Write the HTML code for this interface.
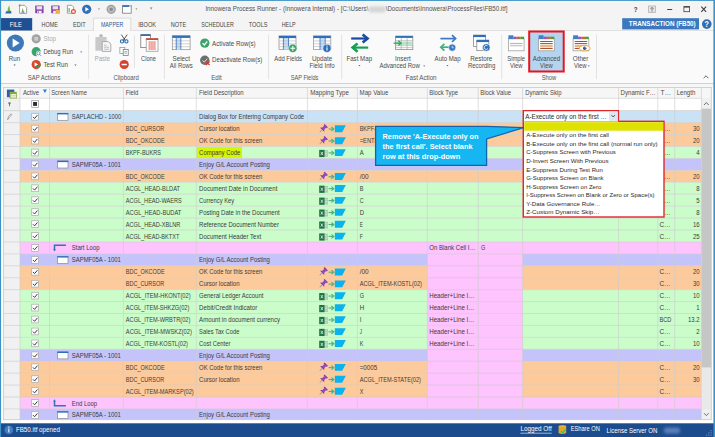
<!DOCTYPE html>
<html><head><meta charset="utf-8"><title>Innowera Process Runner</title>
<style>
html,body{margin:0;padding:0;width:715px;height:437px;overflow:hidden;background:#fff}
svg{display:block;font-family:"Liberation Sans",sans-serif}
text{white-space:pre}
</style></head><body>
<svg width="715" height="437" viewBox="0 0 715 437">
<rect x="0.00" y="0.00" width="715.00" height="437.00" fill="#ffffff"/>
<rect x="0.00" y="0.00" width="715.00" height="30.50" fill="#f4f4f4"/>
<rect x="0.00" y="30.50" width="715.00" height="53.10" fill="#fafafa"/>
<line x1="0.00" y1="30.50" x2="715.00" y2="30.50" stroke="#dadada" stroke-width="0.8"/>
<line x1="0.00" y1="83.60" x2="715.00" y2="83.60" stroke="#cdcdcd" stroke-width="1"/>
<rect x="0.00" y="84.10" width="715.00" height="3.40" fill="#f6f6f6"/>
<rect x="0.00" y="423.30" width="715.00" height="13.70" fill="#1c4b8e"/>
<path d="M9.6 5.2 C8.2 6.8 7.4 9 7.6 11.6 L10.6 11.2 C9.6 9.4 9.4 7.2 9.6 5.2Z" fill="#74bf2c"/>
<path d="M5.2 13.4 L6.2 11.2 L11.2 11 L11.4 13.4Z" fill="#2a6cb4"/>
<path d="M19.6 5.3 H24.6 L26.6 7.3 V13.4 H19.6Z" fill="#fff" stroke="#8a8a8a" stroke-width="0.8"/>
<path d="M22.9 8 C22.2 9 21.9 10.2 22 11.8 L24 11.6 C23.3 10.6 23.1 9.4 22.9 8Z" fill="#74bf2c"/>
<rect x="21.4" y="11.6" width="3" height="1" fill="#2a6cb4"/>
<circle cx="19.6" cy="5.4" r="0.9" fill="#e05a3a"/>
<rect x="35.2" y="5.6" width="8.4" height="7.6" rx="0.6" fill="#8a3fb0"/>
<rect x="36.6" y="6.2" width="5.6" height="3.2" fill="#e6e6e6"/>
<rect x="37.2" y="10.8" width="4.4" height="2.4" fill="#ffffff"/><rect x="37.8" y="11.3" width="1" height="1.6" fill="#8a3fb0"/>
<rect x="51.2" y="5.6" width="8.4" height="7.6" rx="0.6" fill="#8a3fb0"/>
<rect x="52.6" y="6.2" width="5.6" height="3.2" fill="#e6e6e6"/>
<rect x="53.2" y="10.8" width="2.6" height="2.4" fill="#ffffff"/>
<path d="M55.8 10 H60 V13.6 H55.8Z" fill="#f0b040"/>
<path d="M67.4 5.3 H71.8 L73.6 7.1 V13.2 H67.4Z" fill="#fff" stroke="#8a8a8a" stroke-width="0.8"/>
<rect x="68.6" y="8" width="1" height="4" fill="#3aa23a"/>
<circle cx="73.4" cy="11.6" r="2.5" fill="#e0553f"/><rect x="72.3" y="10.6" width="2.2" height="2" fill="#fff"/>
<circle cx="86.7" cy="9.3" r="4.6" fill="#2f70b8"/><path d="M85.3 7 L89 9.3 L85.3 11.6Z" fill="#fff"/>
<path d="M97.9 8.5 H100 L98.95 9.7Z" fill="#777"/>
<circle cx="111.2" cy="9.3" r="4.6" fill="#9c9c9c"/><circle cx="111.2" cy="9.3" r="3.4" fill="#bdbdbd"/><rect x="109.7" y="7.8" width="3" height="3" fill="#8a8a8a"/>
<rect x="122.6" y="5.4" width="8.6" height="7.8" fill="#fff" stroke="#7a7a7a" stroke-width="0.8"/><rect x="122.6" y="5.2" width="8.6" height="1.8" fill="#3a78c0"/><rect x="129" y="5.2" width="2.2" height="1.8" fill="#c8c8c8"/>
<path d="M135.4 8.5 H137.5 L136.45 9.7Z" fill="#777"/>
<path d="M150.1 8.2 H152.3 L151.2 9.6Z" fill="#777"/><rect x="150.1" y="7.1" width="2.2" height="0.5" fill="#777"/>
<text x="205.40" y="10.90" font-size="6.59" fill="#505050" textLength="163.00" lengthAdjust="spacingAndGlyphs">Innowera Process Runner - (Innowera Internal) - [C:\Users\</text>
<rect x="369" y="6.5" width="16.5" height="6" fill="#d6d6d6" rx="1.5" filter="url(#blur1)"/>
<text x="385.70" y="10.90" font-size="6.59" fill="#505050" textLength="121.70" lengthAdjust="spacingAndGlyphs">\Documents\Innowera\ProcessFiles\FB50.itf]</text>
<defs><filter id="blur1" x="-20%" y="-50%" width="140%" height="200%"><feGaussianBlur stdDeviation="1.2"/></filter><filter id="blur2" x="-20%" y="-50%" width="140%" height="200%"><feGaussianBlur stdDeviation="1.5"/></filter></defs>
<text x="633.80" y="11.90" font-size="7.20" fill="#3a3a3a" textLength="3.80" lengthAdjust="spacingAndGlyphs" font-weight="bold">?</text>
<rect x="648.6" y="6.0" width="6.9" height="6.5" fill="#e4e4e4" stroke="#b4b4b4" stroke-width="0.8"/><path d="M652.05 11.6 V7.6 M650.6 8.9 L652.05 7.4 L653.5 8.9" stroke="#6a6a6a" stroke-width="0.8" fill="none"/>
<rect x="667.2" y="9.0" width="5" height="1" fill="#444"/>
<rect x="683.9" y="6.6" width="5.7" height="5.1" fill="none" stroke="#444" stroke-width="0.8"/><rect x="683.9" y="6.3" width="5.7" height="1.3" fill="#444"/>
<path d="M701.3 6.6 L706.1 11.8 M706.1 6.6 L701.3 11.8" stroke="#3a3a3a" stroke-width="1.05"/>
<rect x="0.00" y="18.10" width="32.20" height="12.40" fill="#1f4f94"/>
<text x="9.70" y="26.50" font-size="6.59" fill="#ffffff" textLength="12.10" lengthAdjust="spacingAndGlyphs">FILE</text>
<text x="41.60" y="26.60" font-size="6.59" fill="#444" textLength="16.30" lengthAdjust="spacingAndGlyphs">HOME</text>
<text x="73.00" y="26.60" font-size="6.59" fill="#444" textLength="12.60" lengthAdjust="spacingAndGlyphs">EDIT</text>
<path d="M93.5 30.8 V18.1 H130.8 V30.8" fill="#fafafa" stroke="#d4d4d4" stroke-width="0.8"/>
<text x="100.90" y="26.60" font-size="6.59" fill="#2b5797" textLength="22.40" lengthAdjust="spacingAndGlyphs">MAPPER</text>
<text x="138.30" y="26.60" font-size="6.59" fill="#444" textLength="17.70" lengthAdjust="spacingAndGlyphs">IBOOK</text>
<text x="170.80" y="26.60" font-size="6.59" fill="#444" textLength="15.40" lengthAdjust="spacingAndGlyphs">NOTE</text>
<text x="201.20" y="26.60" font-size="6.59" fill="#444" textLength="32.70" lengthAdjust="spacingAndGlyphs">SCHEDULER</text>
<text x="248.70" y="26.60" font-size="6.59" fill="#444" textLength="18.80" lengthAdjust="spacingAndGlyphs">TOOLS</text>
<text x="281.70" y="26.60" font-size="6.59" fill="#444" textLength="14.00" lengthAdjust="spacingAndGlyphs">HELP</text>
<rect x="622.20" y="18.20" width="76.80" height="11.20" fill="#3b78bd"/>
<text x="628.80" y="26.40" font-size="7.13" fill="#ffffff" textLength="66.90" lengthAdjust="spacingAndGlyphs" font-weight="bold">TRANSACTION (FB50)</text>
<circle cx="706.8" cy="24.1" r="4.8" fill="#2f6cb3"/>
<text x="704.60" y="26.90" font-size="8.21" fill="#ffffff" textLength="4.40" lengthAdjust="spacingAndGlyphs" font-weight="bold">?</text>
<circle cx="15.4" cy="43" r="8.6" fill="#3f78b9"/><path d="M12.6 38.6 L19.6 43 L12.6 47.4Z" fill="#fff"/>
<text x="8.80" y="60.90" font-size="6.70" fill="#4a4a4a" textLength="11.30" lengthAdjust="spacingAndGlyphs">Run</text>
<path d="M13.50 64.60 H15.70 L14.60 65.90Z" fill="#666"/>
<circle cx="36.2" cy="38.8" r="4.6" fill="#a3a3a3"/><rect x="34.4" y="37.0" width="3.6" height="3.6" fill="#d6d6d6"/><path d="M36.2 37.2 V40.4 M34.6 38.8 H37.8" stroke="#b8b8b8" stroke-width="0.5"/>
<text x="43.40" y="41.00" font-size="6.70" fill="#ababab" textLength="12.60" lengthAdjust="spacingAndGlyphs">Stop</text>
<circle cx="36.2" cy="51.7" r="4.6" fill="#3aa56a"/><circle cx="38.6" cy="53.4" r="2.6" fill="#fafafa"/><circle cx="38.4" cy="53.2" r="1.6" fill="#fff" stroke="#3a6ab8" stroke-width="0.7"/><path d="M39.5 54.3 L41 55.8" stroke="#3a6ab8" stroke-width="0.8"/>
<text x="43.40" y="53.90" font-size="6.70" fill="#4a4a4a" textLength="29.60" lengthAdjust="spacingAndGlyphs">Debug Run</text>
<path d="M80.10 51.50 H82.30 L81.20 52.80Z" fill="#666"/>
<circle cx="36.2" cy="64.6" r="4.6" fill="#d8482e"/><path d="M34.6 62.2 L38 64.4 L34.6 66.6Z" fill="#fff"/><path d="M36.2 66.2 L37.8 67.8 L40.8 64.6" stroke="#2aa050" stroke-width="1.2" fill="none"/>
<text x="43.40" y="66.80" font-size="6.70" fill="#4a4a4a" textLength="24.60" lengthAdjust="spacingAndGlyphs">Test Run</text>
<path d="M74.40 64.60 H76.60 L75.50 65.90Z" fill="#666"/>
<text x="27.70" y="79.80" font-size="6.70" fill="#555" textLength="32.70" lengthAdjust="spacingAndGlyphs">SAP Actions</text>
<line x1="88.60" y1="34.70" x2="88.60" y2="79.20" stroke="#dcdcdc" stroke-width="0.8"/>
<path d="M95.4 37 H99 V35.2 H103 V37 H106.6 V50.8 H95.4Z" fill="#c9c9c9"/><rect x="99.8" y="34.4" width="2.4" height="1.8" fill="#b0b0b0"/>
<path d="M102.2 41.6 H108.4 L110.8 44 V51.4 H102.2Z" fill="#f6f6f6" stroke="#a4a4a4" stroke-width="0.9"/><path d="M104 45.2 H106.6 M104 47.2 H109 M104 49.2 H109" stroke="#a8a8a8" stroke-width="0.7"/>
<text x="94.70" y="60.70" font-size="6.70" fill="#a6a6a6" textLength="15.30" lengthAdjust="spacingAndGlyphs">Paste</text>
<path d="M121.3 34.6 L125.6 41 M127.2 34.6 L122.8 41" stroke="#444" stroke-width="0.9"/><circle cx="122" cy="41.4" r="1.6" fill="none" stroke="#1f6cc0" stroke-width="1.1"/><circle cx="126.4" cy="41.4" r="1.6" fill="none" stroke="#1f6cc0" stroke-width="1.1"/>
<rect x="119.9" y="47.5" width="5" height="6" fill="#fff" stroke="#8a8a8a" stroke-width="0.7"/><rect x="123.2" y="49.6" width="5" height="6" fill="#fff" stroke="#6a6a6a" stroke-width="0.7"/><path d="M124.4 51.6 H127 M124.4 53.2 H127" stroke="#3a7ac0" stroke-width="0.6"/>
<circle cx="124.2" cy="64.5" r="4.6" fill="#d9432b"/><rect x="121.6" y="63.8" width="5.2" height="1.5" fill="#fff"/>
<line x1="134.40" y1="35.50" x2="134.40" y2="68.00" stroke="#dcdcdc" stroke-width="0.8"/>
<rect x="140.8" y="34.6" width="9.6" height="13" fill="#fff" stroke="#777" stroke-width="0.8"/><rect x="140.8" y="34.4" width="9.6" height="1.6" fill="#2f6fb8"/>
<rect x="146.2" y="38.6" width="11.8" height="12.6" fill="#fff" stroke="#8a8a8a" stroke-width="0.7"/><rect x="146.2" y="38.3" width="11.8" height="1.7" fill="#d8452f"/><rect x="148.4" y="41.2" width="7.4" height="8.8" fill="#f6c4bc"/><path d="M149.4 41.2 V50 M151.2 41.2 V50 M153 41.2 V50 M154.8 41.2 V50" stroke="#e8877a" stroke-width="0.6"/>
<text x="141.00" y="60.70" font-size="6.70" fill="#4a4a4a" textLength="15.00" lengthAdjust="spacingAndGlyphs">Clone</text>
<text x="113.40" y="79.80" font-size="6.70" fill="#555" textLength="25.50" lengthAdjust="spacingAndGlyphs">Clipboard</text>
<line x1="164.40" y1="34.70" x2="164.40" y2="79.20" stroke="#dcdcdc" stroke-width="0.8"/>
<rect x="172.30" y="35.70" width="17.80" height="14.00" fill="#fff" stroke="#8a8a8a" stroke-width="0.7"/>
<rect x="176.22" y="37.70" width="4.63" height="12.00" fill="#c4e0f8"/>
<line x1="172.30" y1="40.85" x2="190.10" y2="40.85" stroke="#b0b0b0" stroke-width="0.6"/>
<line x1="172.30" y1="43.80" x2="190.10" y2="43.80" stroke="#b0b0b0" stroke-width="0.6"/>
<line x1="172.30" y1="46.75" x2="190.10" y2="46.75" stroke="#b0b0b0" stroke-width="0.6"/>
<line x1="176.22" y1="37.70" x2="176.22" y2="49.70" stroke="#3a6ab0" stroke-width="0.8"/>
<line x1="180.84" y1="37.70" x2="180.84" y2="49.70" stroke="#3a6ab0" stroke-width="0.8"/>
<rect x="172.30" y="35.70" width="17.80" height="2.2" fill="#2f6fb8"/>
<text x="172.50" y="60.90" font-size="6.70" fill="#4a4a4a" textLength="17.40" lengthAdjust="spacingAndGlyphs">Select</text>
<text x="169.70" y="68.00" font-size="6.70" fill="#4a4a4a" textLength="23.00" lengthAdjust="spacingAndGlyphs">All Rows</text>
<circle cx="204.8" cy="43.1" r="4.7" fill="#3aa66a"/><path d="M202.6 43.2 L204.3 45 L207.2 41.5" stroke="#fff" stroke-width="1.2" fill="none"/>
<text x="212.00" y="45.50" font-size="6.70" fill="#4a4a4a" textLength="43.70" lengthAdjust="spacingAndGlyphs">Activate Row(s)</text>
<circle cx="204.8" cy="60.3" r="4.7" fill="#6e6e6e"/><path d="M202.6 60.4 L204.3 62.2 L207.2 58.7" stroke="#ddd" stroke-width="1" fill="none"/><path d="M206 61.6 L209.6 65.2 M209.6 61.6 L206 65.2" stroke="#e0302a" stroke-width="1.2"/>
<text x="212.00" y="62.40" font-size="6.70" fill="#4a4a4a" textLength="50.40" lengthAdjust="spacingAndGlyphs">Deactivate Row(s)</text>
<text x="211.20" y="79.80" font-size="6.70" fill="#555" textLength="10.60" lengthAdjust="spacingAndGlyphs">Edit</text>
<line x1="268.60" y1="34.70" x2="268.60" y2="79.20" stroke="#dcdcdc" stroke-width="0.8"/>
<rect x="279.00" y="35.90" width="17.00" height="13.60" fill="#fff" stroke="#8a8a8a" stroke-width="0.7"/>
<rect x="283.42" y="37.90" width="5.10" height="11.60" fill="#c4e0f8"/>
<line x1="279.00" y1="40.95" x2="296.00" y2="40.95" stroke="#b0b0b0" stroke-width="0.6"/>
<line x1="279.00" y1="43.80" x2="296.00" y2="43.80" stroke="#b0b0b0" stroke-width="0.6"/>
<line x1="279.00" y1="46.65" x2="296.00" y2="46.65" stroke="#b0b0b0" stroke-width="0.6"/>
<line x1="283.42" y1="37.90" x2="283.42" y2="49.50" stroke="#3a6ab0" stroke-width="0.8"/>
<line x1="288.52" y1="37.90" x2="288.52" y2="49.50" stroke="#3a6ab0" stroke-width="0.8"/>
<rect x="279.00" y="35.90" width="17.00" height="2.2" fill="#2f6fb8"/>
<circle cx="292.8" cy="48.3" r="4.3" fill="#3aa66a" stroke="#fff" stroke-width="0.6"/><path d="M292.8 45.9 V50.7 M290.4 48.3 H295.2" stroke="#fff" stroke-width="1.1"/>
<text x="274.30" y="60.70" font-size="6.70" fill="#4a4a4a" textLength="27.70" lengthAdjust="spacingAndGlyphs">Add Fields</text>
<rect x="313.40" y="35.90" width="17.40" height="13.60" fill="#fff" stroke="#8a8a8a" stroke-width="0.7"/>
<rect x="320.01" y="37.90" width="5.22" height="11.60" fill="#c4e0f8"/>
<line x1="313.40" y1="40.95" x2="330.80" y2="40.95" stroke="#b0b0b0" stroke-width="0.6"/>
<line x1="313.40" y1="43.80" x2="330.80" y2="43.80" stroke="#b0b0b0" stroke-width="0.6"/>
<line x1="313.40" y1="46.65" x2="330.80" y2="46.65" stroke="#b0b0b0" stroke-width="0.6"/>
<line x1="320.01" y1="37.90" x2="320.01" y2="49.50" stroke="#3a6ab0" stroke-width="0.8"/>
<line x1="325.23" y1="37.90" x2="325.23" y2="49.50" stroke="#3a6ab0" stroke-width="0.8"/>
<rect x="313.40" y="35.90" width="17.40" height="2.2" fill="#2f6fb8"/>
<circle cx="327.0" cy="48.3" r="4.1" fill="#2f6fb8" stroke="#fff" stroke-width="0.6"/><rect x="326.45" y="47.3" width="1.1" height="3.2" fill="#fff"/><rect x="326.45" y="45.5" width="1.1" height="1.1" fill="#fff"/>
<text x="311.90" y="60.70" font-size="6.70" fill="#4a4a4a" textLength="20.40" lengthAdjust="spacingAndGlyphs">Update</text>
<text x="309.50" y="68.00" font-size="6.70" fill="#4a4a4a" textLength="25.20" lengthAdjust="spacingAndGlyphs">Field Info</text>
<text x="290.70" y="79.80" font-size="6.70" fill="#555" textLength="27.70" lengthAdjust="spacingAndGlyphs">SAP Fields</text>
<line x1="341.70" y1="34.70" x2="341.70" y2="79.20" stroke="#dcdcdc" stroke-width="0.8"/>
<path d="M351.2 38.5 H367" stroke="#1a4aa8" stroke-width="2.2"/><path d="M362.6 34.4 L367.6 38.5 L362.6 42.6" stroke="#1a4aa8" stroke-width="2.6" fill="none" stroke-linejoin="miter"/>
<path d="M353 47.6 H368.2" stroke="#14a052" stroke-width="2.2"/><path d="M357.6 43.5 L352.6 47.6 L357.6 51.7" stroke="#14a052" stroke-width="2.6" fill="none" stroke-linejoin="miter"/>
<text x="346.40" y="60.70" font-size="6.70" fill="#4a4a4a" textLength="25.70" lengthAdjust="spacingAndGlyphs">Fast Map</text>
<path d="M358.30 65.00 H360.50 L359.40 66.30Z" fill="#666"/>
<rect x="395.6" y="36.2" width="17.2" height="13.4" fill="#fff" stroke="#8e8e8e" stroke-width="0.8"/><rect x="395.6" y="35.9" width="17.2" height="2" fill="#2f6fb8"/>
<rect x="396" y="41.6" width="16.4" height="3.2" fill="#b6e2c2"/>
<line x1="401.30" y1="37.90" x2="401.30" y2="49.60" stroke="#9a9a9a" stroke-width="0.6"/>
<line x1="407.10" y1="37.90" x2="407.10" y2="49.60" stroke="#9a9a9a" stroke-width="0.6"/>
<line x1="395.60" y1="40.60" x2="412.80" y2="40.60" stroke="#a8a8a8" stroke-width="0.6"/>
<line x1="395.60" y1="45.60" x2="412.80" y2="45.60" stroke="#a8a8a8" stroke-width="0.6"/>
<line x1="395.60" y1="47.60" x2="412.80" y2="47.60" stroke="#a8a8a8" stroke-width="0.6"/>
<path d="M393.6 43.2 H400.6" stroke="#2ea468" stroke-width="1.3"/><path d="M398.4 40.8 L400.9 43.2 L398.4 45.6" stroke="#2ea468" stroke-width="1.3" fill="none"/>
<text x="395.10" y="60.70" font-size="6.70" fill="#4a4a4a" textLength="15.60" lengthAdjust="spacingAndGlyphs">Insert</text>
<text x="379.40" y="67.60" font-size="6.70" fill="#4a4a4a" textLength="40.40" lengthAdjust="spacingAndGlyphs">Advanced Row</text>
<path d="M423.10 65.40 H425.30 L424.20 66.70Z" fill="#666"/>
<path d="M440.4 38.6 H455.2" stroke="#3a78c0" stroke-width="1.7"/><path d="M452 35.2 L455.6 38.6 L452 42" stroke="#3a78c0" stroke-width="1.7" fill="none"/>
<path d="M441 47.2 H450" stroke="#3fb07a" stroke-width="1.7"/><path d="M444.4 43.8 L440.8 47.2 L444.4 50.6" stroke="#3fb07a" stroke-width="1.7" fill="none"/>
<circle cx="452.2" cy="47.6" r="3.6" fill="#3a78c0" stroke="#fafafa" stroke-width="0.6"/><path d="M452.2 45.8 V47.8 H453.8" stroke="#fff" stroke-width="0.7" fill="none"/>
<text x="434.60" y="60.70" font-size="6.70" fill="#4a4a4a" textLength="25.90" lengthAdjust="spacingAndGlyphs">Auto Map</text>
<path d="M446.30 65.00 H448.50 L447.40 66.30Z" fill="#666"/>
<rect x="473.4" y="35.2" width="12.2" height="11.2" fill="#fff" stroke="#8a8a8a" stroke-width="0.8"/><rect x="473.2" y="34.9" width="12.6" height="2.2" fill="#2f6fb8"/>
<rect x="476.8" y="40.2" width="12.0" height="10.4" fill="#fff" stroke="#8a8a8a" stroke-width="0.8"/><rect x="476.6" y="39.9" width="12.4" height="2.2" fill="#2f6fb8"/>
<circle cx="486.3" cy="47.5" r="3.8" fill="#2f6fb8" stroke="#fafafa" stroke-width="0.6"/><path d="M487.4 45.8 A2 2 0 1 0 488 48.4" stroke="#fff" stroke-width="0.8" fill="none"/>
<text x="470.25" y="60.70" font-size="6.70" fill="#4a4a4a" textLength="22.10" lengthAdjust="spacingAndGlyphs">Restore</text>
<text x="467.90" y="67.60" font-size="6.70" fill="#4a4a4a" textLength="27.40" lengthAdjust="spacingAndGlyphs">Recording</text>
<text x="405.80" y="79.70" font-size="6.70" fill="#555" textLength="30.80" lengthAdjust="spacingAndGlyphs">Fast Action</text>
<line x1="501.70" y1="34.70" x2="501.70" y2="79.20" stroke="#dcdcdc" stroke-width="0.8"/>
<rect x="508.40" y="38.70" width="15.7" height="12.1" fill="#fff" stroke="#a0a0a0" stroke-width="0.8"/>
<rect x="508.40" y="35.30" width="5" height="3.8" fill="#3f7fc8"/><rect x="513.40" y="36.70" width="3.2" height="2.4" fill="#9a50c8"/><rect x="516.60" y="36.70" width="3.8" height="2.4" fill="#c86a28"/><rect x="520.40" y="36.70" width="3.7" height="2.4" fill="#4aa03a"/>
<line x1="510.00" y1="43.50" x2="522.50" y2="43.50" stroke="#b8b8b8" stroke-width="1.2"/>
<line x1="510.00" y1="45.70" x2="522.50" y2="45.70" stroke="#c8c8c8" stroke-width="1.3"/>
<text x="507.30" y="60.70" font-size="6.70" fill="#4a4a4a" textLength="17.80" lengthAdjust="spacingAndGlyphs">Simple</text>
<text x="509.90" y="68.00" font-size="6.70" fill="#4a4a4a" textLength="12.60" lengthAdjust="spacingAndGlyphs">View</text>
<rect x="529.2" y="31.5" width="34.5" height="40" fill="#b4d4f0" stroke="#e8141c" stroke-width="2"/>
<rect x="538.60" y="38.70" width="15.7" height="12.1" fill="#fff" stroke="#a0a0a0" stroke-width="0.8"/>
<rect x="538.60" y="35.30" width="5" height="3.8" fill="#3f7fc8"/><rect x="543.60" y="36.70" width="3.2" height="2.4" fill="#9a50c8"/><rect x="546.80" y="36.70" width="3.8" height="2.4" fill="#c86a28"/><rect x="550.60" y="36.70" width="3.7" height="2.4" fill="#4aa03a"/>
<line x1="540.20" y1="41.50" x2="552.70" y2="41.50" stroke="#2f6fc0" stroke-width="1.0"/>
<line x1="540.20" y1="43.50" x2="552.70" y2="43.50" stroke="#3a9a2a" stroke-width="1.0"/>
<rect x="540.20" y="44.60" width="12.5" height="2.8" fill="#e6b690"/>
<line x1="540.20" y1="48.50" x2="552.70" y2="48.50" stroke="#a8582a" stroke-width="1.0"/>
<text x="532.80" y="60.70" font-size="6.70" fill="#4a4a4a" textLength="27.30" lengthAdjust="spacingAndGlyphs">Advanced</text>
<text x="540.10" y="68.00" font-size="6.70" fill="#4a4a4a" textLength="12.60" lengthAdjust="spacingAndGlyphs">View</text>
<rect x="573.10" y="38.70" width="15.7" height="12.1" fill="#fff" stroke="#a0a0a0" stroke-width="0.8"/>
<rect x="573.10" y="35.30" width="5" height="3.8" fill="#3f7fc8"/><rect x="578.10" y="36.70" width="3.2" height="2.4" fill="#9a50c8"/><rect x="581.30" y="36.70" width="3.8" height="2.4" fill="#c86a28"/><rect x="585.10" y="36.70" width="3.7" height="2.4" fill="#4aa03a"/>
<line x1="574.70" y1="41.50" x2="587.20" y2="41.50" stroke="#2f6fc0" stroke-width="1.0"/>
<line x1="574.70" y1="43.50" x2="587.20" y2="43.50" stroke="#3a9a2a" stroke-width="1.0"/>
<rect x="574.70" y="44.60" width="12.5" height="2.8" fill="#e6b690"/>
<line x1="574.70" y1="48.50" x2="587.20" y2="48.50" stroke="#a8582a" stroke-width="1.0"/>
<ellipse cx="584.70" cy="48.20" rx="5.4" ry="2.7" fill="#fff" stroke="#e8a030" stroke-width="0.9"/><circle cx="584.70" cy="48.20" r="1.7" fill="#2a4f8a"/><circle cx="585.20" cy="47.70" r="0.5" fill="#fff"/>
<text x="572.80" y="60.70" font-size="6.70" fill="#4a4a4a" textLength="15.60" lengthAdjust="spacingAndGlyphs">Other</text>
<text x="574.00" y="68.00" font-size="6.70" fill="#4a4a4a" textLength="12.60" lengthAdjust="spacingAndGlyphs">View</text>
<path d="M587.70 65.40 H589.90 L588.80 66.70Z" fill="#666"/>
<text x="541.70" y="79.80" font-size="6.70" fill="#555" textLength="14.60" lengthAdjust="spacingAndGlyphs">Show</text>
<line x1="596.50" y1="34.70" x2="596.50" y2="79.20" stroke="#dcdcdc" stroke-width="0.8"/>
<path d="M703.6 78.2 L706 75.8 L708.4 78.2" stroke="#555" stroke-width="0.9" fill="none"/>
<clipPath id="gclip"><rect x="3.5" y="87.5" width="707.8" height="332.2"/></clipPath>
<rect x="3.50" y="87.50" width="707.80" height="332.20" fill="#ffffff"/>
<rect x="3.50" y="87.50" width="707.80" height="10.80" fill="#f6f6f6"/>
<rect x="3.50" y="98.30" width="16.50" height="321.40" fill="#f1f1f1"/>
<g clip-path="url(#gclip)">
<rect x="20.00" y="110.70" width="681.40" height="11.93" fill="#cae2f6"/>
<rect x="20.00" y="122.63" width="681.40" height="11.93" fill="#fdca9b"/>
<rect x="20.00" y="134.56" width="681.40" height="11.93" fill="#fdca9b"/>
<rect x="20.00" y="146.49" width="681.40" height="11.93" fill="#cbfdcb"/>
<rect x="20.00" y="158.42" width="681.40" height="11.93" fill="#c4c4fb"/>
<rect x="20.00" y="170.35" width="681.40" height="11.93" fill="#fdca9b"/>
<rect x="20.00" y="182.28" width="681.40" height="11.93" fill="#cbfdcb"/>
<rect x="20.00" y="194.21" width="681.40" height="11.93" fill="#cbfdcb"/>
<rect x="20.00" y="206.14" width="681.40" height="11.93" fill="#cbfdcb"/>
<rect x="20.00" y="218.07" width="681.40" height="11.93" fill="#cbfdcb"/>
<rect x="20.00" y="230.00" width="681.40" height="11.93" fill="#cbfdcb"/>
<rect x="20.00" y="241.93" width="681.40" height="11.93" fill="#fdc4fd"/>
<rect x="20.00" y="253.86" width="681.40" height="11.93" fill="#c4c4fb"/>
<rect x="427.30" y="253.86" width="95.30" height="11.93" fill="#fdc4fd"/>
<rect x="20.00" y="265.79" width="681.40" height="11.93" fill="#fdca9b"/>
<rect x="427.30" y="265.79" width="95.30" height="11.93" fill="#fdc4fd"/>
<rect x="20.00" y="277.72" width="681.40" height="11.93" fill="#fdca9b"/>
<rect x="427.30" y="277.72" width="95.30" height="11.93" fill="#fdc4fd"/>
<rect x="20.00" y="289.65" width="681.40" height="11.93" fill="#cbfdcb"/>
<rect x="427.30" y="289.65" width="95.30" height="11.93" fill="#fdc4fd"/>
<rect x="20.00" y="301.58" width="681.40" height="11.93" fill="#cbfdcb"/>
<rect x="427.30" y="301.58" width="95.30" height="11.93" fill="#fdc4fd"/>
<rect x="20.00" y="313.51" width="681.40" height="11.93" fill="#cbfdcb"/>
<rect x="427.30" y="313.51" width="95.30" height="11.93" fill="#fdc4fd"/>
<rect x="20.00" y="325.44" width="681.40" height="11.93" fill="#cbfdcb"/>
<rect x="427.30" y="325.44" width="95.30" height="11.93" fill="#fdc4fd"/>
<rect x="20.00" y="337.37" width="681.40" height="11.93" fill="#cbfdcb"/>
<rect x="427.30" y="337.37" width="95.30" height="11.93" fill="#fdc4fd"/>
<rect x="20.00" y="349.30" width="681.40" height="11.93" fill="#c4c4fb"/>
<rect x="427.30" y="349.30" width="95.30" height="11.93" fill="#fdc4fd"/>
<rect x="20.00" y="361.23" width="681.40" height="11.93" fill="#fdca9b"/>
<rect x="427.30" y="361.23" width="95.30" height="11.93" fill="#fdc4fd"/>
<rect x="20.00" y="373.16" width="681.40" height="11.93" fill="#fdca9b"/>
<rect x="427.30" y="373.16" width="95.30" height="11.93" fill="#fdc4fd"/>
<rect x="20.00" y="385.09" width="681.40" height="11.93" fill="#fdca9b"/>
<rect x="427.30" y="385.09" width="95.30" height="11.93" fill="#fdc4fd"/>
<rect x="20.00" y="397.02" width="681.40" height="11.93" fill="#fdc4fd"/>
<rect x="20.00" y="408.95" width="681.40" height="11.93" fill="#c4c4fb"/>
<rect x="196.60" y="147.09" width="45.40" height="11.03" fill="#d4f700"/>
<rect x="701.40" y="98.30" width="9.90" height="321.40" fill="#e9e9e9"/>
<rect x="701.40" y="98.70" width="9.90" height="10.00" fill="#f0f0f0"/>
<rect x="701.40" y="108.70" width="9.90" height="258.70" fill="#c6c6c6"/>
<rect x="701.40" y="409.60" width="9.90" height="10.10" fill="#f0f0f0"/>
<path d="M704 105 L706.35 102.6 L708.7 105" stroke="#606060" stroke-width="0.9" fill="none"/>
<path d="M704 413.2 L706.35 415.6 L708.7 413.2" stroke="#606060" stroke-width="0.9" fill="none"/>
<line x1="3.50" y1="98.30" x2="701.40" y2="98.30" stroke="#dcdcdc" stroke-width="0.9"/>
<line x1="3.50" y1="110.70" x2="701.40" y2="110.70" stroke="#d2d2d2" stroke-width="0.9"/>
<line x1="3.50" y1="122.63" x2="701.40" y2="122.63" stroke="rgba(204,204,204,0.8)" stroke-width="0.8"/>
<line x1="3.50" y1="134.56" x2="701.40" y2="134.56" stroke="rgba(204,204,204,0.8)" stroke-width="0.8"/>
<line x1="3.50" y1="146.49" x2="701.40" y2="146.49" stroke="rgba(204,204,204,0.8)" stroke-width="0.8"/>
<line x1="3.50" y1="158.42" x2="701.40" y2="158.42" stroke="rgba(204,204,204,0.8)" stroke-width="0.8"/>
<line x1="3.50" y1="170.35" x2="701.40" y2="170.35" stroke="rgba(204,204,204,0.8)" stroke-width="0.8"/>
<line x1="3.50" y1="182.28" x2="701.40" y2="182.28" stroke="rgba(204,204,204,0.8)" stroke-width="0.8"/>
<line x1="3.50" y1="194.21" x2="701.40" y2="194.21" stroke="rgba(204,204,204,0.8)" stroke-width="0.8"/>
<line x1="3.50" y1="206.14" x2="701.40" y2="206.14" stroke="rgba(204,204,204,0.8)" stroke-width="0.8"/>
<line x1="3.50" y1="218.07" x2="701.40" y2="218.07" stroke="rgba(204,204,204,0.8)" stroke-width="0.8"/>
<line x1="3.50" y1="230.00" x2="701.40" y2="230.00" stroke="rgba(204,204,204,0.8)" stroke-width="0.8"/>
<line x1="3.50" y1="241.93" x2="701.40" y2="241.93" stroke="rgba(204,204,204,0.8)" stroke-width="0.8"/>
<line x1="3.50" y1="253.86" x2="701.40" y2="253.86" stroke="rgba(204,204,204,0.8)" stroke-width="0.8"/>
<line x1="3.50" y1="265.79" x2="701.40" y2="265.79" stroke="rgba(204,204,204,0.8)" stroke-width="0.8"/>
<line x1="3.50" y1="277.72" x2="701.40" y2="277.72" stroke="rgba(204,204,204,0.8)" stroke-width="0.8"/>
<line x1="3.50" y1="289.65" x2="701.40" y2="289.65" stroke="rgba(204,204,204,0.8)" stroke-width="0.8"/>
<line x1="3.50" y1="301.58" x2="701.40" y2="301.58" stroke="rgba(204,204,204,0.8)" stroke-width="0.8"/>
<line x1="3.50" y1="313.51" x2="701.40" y2="313.51" stroke="rgba(204,204,204,0.8)" stroke-width="0.8"/>
<line x1="3.50" y1="325.44" x2="701.40" y2="325.44" stroke="rgba(204,204,204,0.8)" stroke-width="0.8"/>
<line x1="3.50" y1="337.37" x2="701.40" y2="337.37" stroke="rgba(204,204,204,0.8)" stroke-width="0.8"/>
<line x1="3.50" y1="349.30" x2="701.40" y2="349.30" stroke="rgba(204,204,204,0.8)" stroke-width="0.8"/>
<line x1="3.50" y1="361.23" x2="701.40" y2="361.23" stroke="rgba(204,204,204,0.8)" stroke-width="0.8"/>
<line x1="3.50" y1="373.16" x2="701.40" y2="373.16" stroke="rgba(204,204,204,0.8)" stroke-width="0.8"/>
<line x1="3.50" y1="385.09" x2="701.40" y2="385.09" stroke="rgba(204,204,204,0.8)" stroke-width="0.8"/>
<line x1="3.50" y1="397.02" x2="701.40" y2="397.02" stroke="rgba(204,204,204,0.8)" stroke-width="0.8"/>
<line x1="3.50" y1="408.95" x2="701.40" y2="408.95" stroke="rgba(204,204,204,0.8)" stroke-width="0.8"/>
<line x1="20.00" y1="87.50" x2="20.00" y2="419.70" stroke="rgba(205,205,205,0.8)" stroke-width="0.8"/>
<line x1="49.50" y1="87.50" x2="49.50" y2="419.70" stroke="rgba(205,205,205,0.8)" stroke-width="0.8"/>
<line x1="123.40" y1="87.50" x2="123.40" y2="419.70" stroke="rgba(205,205,205,0.8)" stroke-width="0.8"/>
<line x1="196.30" y1="87.50" x2="196.30" y2="419.70" stroke="rgba(205,205,205,0.8)" stroke-width="0.8"/>
<line x1="307.40" y1="87.50" x2="307.40" y2="419.70" stroke="rgba(205,205,205,0.8)" stroke-width="0.8"/>
<line x1="357.40" y1="87.50" x2="357.40" y2="419.70" stroke="rgba(205,205,205,0.8)" stroke-width="0.8"/>
<line x1="427.30" y1="87.50" x2="427.30" y2="419.70" stroke="rgba(205,205,205,0.8)" stroke-width="0.8"/>
<line x1="478.20" y1="87.50" x2="478.20" y2="419.70" stroke="rgba(205,205,205,0.8)" stroke-width="0.8"/>
<line x1="522.60" y1="87.50" x2="522.60" y2="419.70" stroke="rgba(205,205,205,0.8)" stroke-width="0.8"/>
<line x1="618.60" y1="87.50" x2="618.60" y2="419.70" stroke="rgba(205,205,205,0.8)" stroke-width="0.8"/>
<line x1="657.80" y1="87.50" x2="657.80" y2="419.70" stroke="rgba(205,205,205,0.8)" stroke-width="0.8"/>
<line x1="674.70" y1="87.50" x2="674.70" y2="419.70" stroke="rgba(205,205,205,0.8)" stroke-width="0.8"/>
<line x1="701.40" y1="87.50" x2="701.40" y2="419.70" stroke="rgba(205,205,205,0.8)" stroke-width="0.8"/>
</g>
<rect x="3.5" y="87.5" width="707.8" height="332.2" fill="none" stroke="#c9c9c9" stroke-width="0.8"/>
<text x="22.90" y="94.80" font-size="6.40" fill="#4a4a4a" textLength="16.23" lengthAdjust="spacingAndGlyphs">Active</text>
<text x="51.20" y="94.80" font-size="6.40" fill="#4a4a4a" textLength="35.69" lengthAdjust="spacingAndGlyphs">Screen Name</text>
<text x="125.70" y="94.80" font-size="6.40" fill="#4a4a4a" textLength="12.65" lengthAdjust="spacingAndGlyphs">Field</text>
<text x="199.00" y="94.80" font-size="6.40" fill="#4a4a4a" textLength="44.63" lengthAdjust="spacingAndGlyphs">Field Description</text>
<text x="310.20" y="94.80" font-size="6.40" fill="#4a4a4a" textLength="38.69" lengthAdjust="spacingAndGlyphs">Mapping Type</text>
<text x="359.60" y="94.80" font-size="6.40" fill="#4a4a4a" textLength="28.74" lengthAdjust="spacingAndGlyphs">Map Value</text>
<text x="429.20" y="94.80" font-size="6.40" fill="#4a4a4a" textLength="28.95" lengthAdjust="spacingAndGlyphs">Block Type</text>
<text x="480.20" y="94.80" font-size="6.40" fill="#4a4a4a" textLength="30.93" lengthAdjust="spacingAndGlyphs">Block Value</text>
<text x="525.30" y="94.80" font-size="6.40" fill="#4a4a4a" textLength="36.18" lengthAdjust="spacingAndGlyphs">Dynamic Skip</text>
<text x="620.60" y="94.80" font-size="6.40" fill="#4a4a4a" textLength="35.11" lengthAdjust="spacingAndGlyphs">Dynamic F…</text>
<text x="660.40" y="94.80" font-size="6.40" fill="#4a4a4a" textLength="10.54" lengthAdjust="spacingAndGlyphs">T…</text>
<text x="676.70" y="94.80" font-size="6.40" fill="#4a4a4a" textLength="18.59" lengthAdjust="spacingAndGlyphs">Length</text>
<path d="M42.9 89.6 H46.9 L44.9 92.9Z" fill="#2f80d0"/>
<rect x="6.9" y="89.6" width="7.4" height="7.6" fill="#2f5fa8"/><rect x="9.6" y="91.8" width="7.2" height="6.6" fill="#8aa838"/><rect x="10.6" y="94.2" width="5.4" height="3.4" fill="#fff"/><path d="M10.6 95.9 H16" stroke="#8aa838" stroke-width="0.6"/>
<path d="M8 102.6 H11 L9.9 104.4 V106.4 L9.1 106 V104.4Z" fill="#606060"/>
<rect x="31.7" y="100.6" width="6.7" height="6.7" fill="#fff" stroke="#9a9a9a" stroke-width="0.7"/><rect x="33.1" y="102.0" width="3.9" height="3.9" fill="#2e2e2e"/>
<path d="M7.6 119.8 L8.4 116.6 L10.8 113.8 L11.8 114.6 L9.4 117.4 Z" fill="none" stroke="#777" stroke-width="0.6"/>
<rect x="31.7" y="113.30" width="6.7" height="6.8" fill="#fbfbfb" stroke="#ababab" stroke-width="0.7"/>
<path d="M33 116.90 L34.6 118.50 L37.4 115.10" stroke="#3c3c3c" stroke-width="1.0" fill="none"/>
<rect x="57.6" y="113.30" width="10.4" height="7" fill="#fff" stroke="#8a8a8a" stroke-width="0.7"/><rect x="57.3" y="113.00" width="11" height="1.4" fill="#2f6fb8"/>
<text x="71.80" y="119.20" font-size="6.40" fill="#3b3b3b" textLength="49.54" lengthAdjust="spacingAndGlyphs">SAPLACHD - 1000</text>
<text x="199.10" y="119.20" font-size="6.40" fill="#3b3b3b" textLength="105.04" lengthAdjust="spacingAndGlyphs">Dialog Box for Entering Company Code</text>
<rect x="31.7" y="125.23" width="6.7" height="6.8" fill="#fbfbfb" stroke="#ababab" stroke-width="0.7"/>
<path d="M33 128.83 L34.6 130.43 L37.4 127.03" stroke="#3c3c3c" stroke-width="1.0" fill="none"/>
<text x="125.80" y="131.13" font-size="6.40" fill="#3b3b3b" textLength="38.29" lengthAdjust="spacingAndGlyphs">BDC_CURSOR</text>
<text x="199.10" y="131.13" font-size="6.40" fill="#3b3b3b" textLength="40.43" lengthAdjust="spacingAndGlyphs">Cursor location</text>
<g transform="translate(323.2 128.63) rotate(45)"><rect x="-2.3" y="-4.3" width="4.6" height="1.5" fill="#7d3fb6"/><rect x="-1.4" y="-3" width="2.8" height="3.2" fill="#8a48c0"/><path d="M-1.6 0 H1.6 L2.9 1.5 H-2.9Z" fill="#7d3fb6"/><rect x="-0.35" y="1.5" width="0.7" height="3.4" fill="#8f8a96"/></g>
<path d="M328.6 129.03 H333" stroke="#45b07e" stroke-width="1.1"/><path d="M331.4 127.03 L333.8 129.03 L331.4 131.03" stroke="#45b07e" stroke-width="1.1" fill="none"/>
<path d="M334.8 125.33 H345.8 L342.2 132.23 H334.8Z" fill="#0ab2ee"/>
<text x="359.70" y="131.13" font-size="6.40" fill="#3b3b3b" textLength="35.03" lengthAdjust="spacingAndGlyphs">BKPF-BUKRS</text>
<text x="659.40" y="131.13" font-size="6.40" fill="#3b3b3b" textLength="11.06" lengthAdjust="spacingAndGlyphs">C…</text>
<text x="692.89" y="131.13" font-size="6.40" fill="#3b3b3b" textLength="6.71" lengthAdjust="spacingAndGlyphs">30</text>
<rect x="31.7" y="137.16" width="6.7" height="6.8" fill="#fbfbfb" stroke="#ababab" stroke-width="0.7"/>
<path d="M33 140.76 L34.6 142.36 L37.4 138.96" stroke="#3c3c3c" stroke-width="1.0" fill="none"/>
<text x="125.80" y="143.06" font-size="6.40" fill="#3b3b3b" textLength="38.78" lengthAdjust="spacingAndGlyphs">BDC_OKCODE</text>
<text x="199.10" y="143.06" font-size="6.40" fill="#3b3b3b" textLength="63.12" lengthAdjust="spacingAndGlyphs">OK Code for this screen</text>
<g transform="translate(323.2 140.56) rotate(45)"><rect x="-2.3" y="-4.3" width="4.6" height="1.5" fill="#7d3fb6"/><rect x="-1.4" y="-3" width="2.8" height="3.2" fill="#8a48c0"/><path d="M-1.6 0 H1.6 L2.9 1.5 H-2.9Z" fill="#7d3fb6"/><rect x="-0.35" y="1.5" width="0.7" height="3.4" fill="#8f8a96"/></g>
<path d="M328.6 140.96 H333" stroke="#45b07e" stroke-width="1.1"/><path d="M331.4 138.96 L333.8 140.96 L331.4 142.96" stroke="#45b07e" stroke-width="1.1" fill="none"/>
<path d="M334.8 137.26 H345.8 L342.2 144.16 H334.8Z" fill="#0ab2ee"/>
<text x="359.70" y="143.06" font-size="6.40" fill="#3b3b3b" textLength="19.05" lengthAdjust="spacingAndGlyphs">=ENTR</text>
<text x="659.40" y="143.06" font-size="6.40" fill="#3b3b3b" textLength="11.06" lengthAdjust="spacingAndGlyphs">C…</text>
<text x="692.89" y="143.06" font-size="6.40" fill="#3b3b3b" textLength="6.71" lengthAdjust="spacingAndGlyphs">20</text>
<rect x="31.7" y="149.09" width="6.7" height="6.8" fill="#fbfbfb" stroke="#ababab" stroke-width="0.7"/>
<path d="M33 152.69 L34.6 154.29 L37.4 150.89" stroke="#3c3c3c" stroke-width="1.0" fill="none"/>
<text x="125.80" y="154.99" font-size="6.40" fill="#3b3b3b" textLength="35.03" lengthAdjust="spacingAndGlyphs">BKPF-BUKRS</text>
<text x="199.10" y="154.99" font-size="6.40" fill="#3b3b3b" textLength="41.27" lengthAdjust="spacingAndGlyphs">Company Code</text>
<rect x="323.6" y="150.19" width="4.4" height="6.6" fill="#a9c9ae"/><path d="M324.4 151.89 H327.6 M324.4 153.49 H327.6 M324.4 155.09 H327.6" stroke="#d8e8da" stroke-width="0.6"/><rect x="319.2" y="149.89" width="5.3" height="7.2" fill="#1d7444"/><path d="M320.8 151.89 L322.9 155.09 M322.9 151.89 L320.8 155.09" stroke="#f0f0f0" stroke-width="0.75"/>
<path d="M328.6 152.89 H333" stroke="#45b07e" stroke-width="1.1"/><path d="M331.4 150.89 L333.8 152.89 L331.4 154.89" stroke="#45b07e" stroke-width="1.1" fill="none"/>
<path d="M334.8 149.19 H345.8 L342.2 156.09 H334.8Z" fill="#0ab2ee"/>
<text x="359.70" y="154.99" font-size="6.40" fill="#3b3b3b" textLength="3.91" lengthAdjust="spacingAndGlyphs">A</text>
<text x="659.40" y="154.99" font-size="6.40" fill="#3b3b3b" textLength="11.06" lengthAdjust="spacingAndGlyphs">C…</text>
<text x="696.25" y="154.99" font-size="6.40" fill="#3b3b3b" textLength="3.35" lengthAdjust="spacingAndGlyphs">4</text>
<rect x="31.7" y="161.02" width="6.7" height="6.8" fill="#fbfbfb" stroke="#ababab" stroke-width="0.7"/>
<path d="M33 164.62 L34.6 166.22 L37.4 162.82" stroke="#3c3c3c" stroke-width="1.0" fill="none"/>
<rect x="57.6" y="161.02" width="10.4" height="7" fill="#fff" stroke="#8a8a8a" stroke-width="0.7"/><rect x="57.3" y="160.72" width="11" height="1.4" fill="#2f6fb8"/>
<text x="71.80" y="166.92" font-size="6.40" fill="#3b3b3b" textLength="49.12" lengthAdjust="spacingAndGlyphs">SAPMF05A - 1001</text>
<text x="199.10" y="166.92" font-size="6.40" fill="#3b3b3b" textLength="70.85" lengthAdjust="spacingAndGlyphs">Enjoy G/L Account Posting</text>
<rect x="31.7" y="172.95" width="6.7" height="6.8" fill="#fbfbfb" stroke="#ababab" stroke-width="0.7"/>
<path d="M33 176.55 L34.6 178.15 L37.4 174.75" stroke="#3c3c3c" stroke-width="1.0" fill="none"/>
<text x="125.80" y="178.85" font-size="6.40" fill="#3b3b3b" textLength="38.78" lengthAdjust="spacingAndGlyphs">BDC_OKCODE</text>
<text x="199.10" y="178.85" font-size="6.40" fill="#3b3b3b" textLength="63.12" lengthAdjust="spacingAndGlyphs">OK Code for this screen</text>
<g transform="translate(323.2 176.35) rotate(45)"><rect x="-2.3" y="-4.3" width="4.6" height="1.5" fill="#7d3fb6"/><rect x="-1.4" y="-3" width="2.8" height="3.2" fill="#8a48c0"/><path d="M-1.6 0 H1.6 L2.9 1.5 H-2.9Z" fill="#7d3fb6"/><rect x="-0.35" y="1.5" width="0.7" height="3.4" fill="#8f8a96"/></g>
<path d="M328.6 176.75 H333" stroke="#45b07e" stroke-width="1.1"/><path d="M331.4 174.75 L333.8 176.75 L331.4 178.75" stroke="#45b07e" stroke-width="1.1" fill="none"/>
<path d="M334.8 173.05 H345.8 L342.2 179.95 H334.8Z" fill="#0ab2ee"/>
<text x="359.70" y="178.85" font-size="6.40" fill="#3b3b3b" textLength="9.01" lengthAdjust="spacingAndGlyphs">/00</text>
<text x="659.40" y="178.85" font-size="6.40" fill="#3b3b3b" textLength="11.06" lengthAdjust="spacingAndGlyphs">C…</text>
<text x="692.89" y="178.85" font-size="6.40" fill="#3b3b3b" textLength="6.71" lengthAdjust="spacingAndGlyphs">20</text>
<rect x="31.7" y="184.88" width="6.7" height="6.8" fill="#fbfbfb" stroke="#ababab" stroke-width="0.7"/>
<path d="M33 188.48 L34.6 190.08 L37.4 186.68" stroke="#3c3c3c" stroke-width="1.0" fill="none"/>
<text x="125.80" y="190.78" font-size="6.40" fill="#3b3b3b" textLength="54.22" lengthAdjust="spacingAndGlyphs">ACGL_HEAD-BLDAT</text>
<text x="199.10" y="190.78" font-size="6.40" fill="#3b3b3b" textLength="78.25" lengthAdjust="spacingAndGlyphs">Document Date in Document</text>
<rect x="323.6" y="185.98" width="4.4" height="6.6" fill="#a9c9ae"/><path d="M324.4 187.68 H327.6 M324.4 189.28 H327.6 M324.4 190.88 H327.6" stroke="#d8e8da" stroke-width="0.6"/><rect x="319.2" y="185.68" width="5.3" height="7.2" fill="#1d7444"/><path d="M320.8 187.68 L322.9 190.88 M322.9 187.68 L320.8 190.88" stroke="#f0f0f0" stroke-width="0.75"/>
<path d="M328.6 188.68 H333" stroke="#45b07e" stroke-width="1.1"/><path d="M331.4 186.68 L333.8 188.68 L331.4 190.68" stroke="#45b07e" stroke-width="1.1" fill="none"/>
<path d="M334.8 184.98 H345.8 L342.2 191.88 H334.8Z" fill="#0ab2ee"/>
<text x="359.70" y="190.78" font-size="6.40" fill="#3b3b3b" textLength="3.65" lengthAdjust="spacingAndGlyphs">B</text>
<text x="659.40" y="190.78" font-size="6.40" fill="#3b3b3b" textLength="11.06" lengthAdjust="spacingAndGlyphs">C…</text>
<text x="696.25" y="190.78" font-size="6.40" fill="#3b3b3b" textLength="3.35" lengthAdjust="spacingAndGlyphs">8</text>
<rect x="31.7" y="196.81" width="6.7" height="6.8" fill="#fbfbfb" stroke="#ababab" stroke-width="0.7"/>
<path d="M33 200.41 L34.6 202.01 L37.4 198.61" stroke="#3c3c3c" stroke-width="1.0" fill="none"/>
<text x="125.80" y="202.71" font-size="6.40" fill="#3b3b3b" textLength="55.96" lengthAdjust="spacingAndGlyphs">ACGL_HEAD-WAERS</text>
<text x="199.10" y="202.71" font-size="6.40" fill="#3b3b3b" textLength="35.09" lengthAdjust="spacingAndGlyphs">Currency Key</text>
<rect x="323.6" y="197.91" width="4.4" height="6.6" fill="#a9c9ae"/><path d="M324.4 199.61 H327.6 M324.4 201.21 H327.6 M324.4 202.81 H327.6" stroke="#d8e8da" stroke-width="0.6"/><rect x="319.2" y="197.61" width="5.3" height="7.2" fill="#1d7444"/><path d="M320.8 199.61 L322.9 202.81 M322.9 199.61 L320.8 202.81" stroke="#f0f0f0" stroke-width="0.75"/>
<path d="M328.6 200.61 H333" stroke="#45b07e" stroke-width="1.1"/><path d="M331.4 198.61 L333.8 200.61 L331.4 202.61" stroke="#45b07e" stroke-width="1.1" fill="none"/>
<path d="M334.8 196.91 H345.8 L342.2 203.81 H334.8Z" fill="#0ab2ee"/>
<text x="359.70" y="202.71" font-size="6.40" fill="#3b3b3b" textLength="3.86" lengthAdjust="spacingAndGlyphs">C</text>
<text x="659.40" y="202.71" font-size="6.40" fill="#3b3b3b" textLength="11.06" lengthAdjust="spacingAndGlyphs">C…</text>
<text x="696.25" y="202.71" font-size="6.40" fill="#3b3b3b" textLength="3.35" lengthAdjust="spacingAndGlyphs">5</text>
<rect x="31.7" y="208.74" width="6.7" height="6.8" fill="#fbfbfb" stroke="#ababab" stroke-width="0.7"/>
<path d="M33 212.34 L34.6 213.94 L37.4 210.54" stroke="#3c3c3c" stroke-width="1.0" fill="none"/>
<text x="125.80" y="214.64" font-size="6.40" fill="#3b3b3b" textLength="55.58" lengthAdjust="spacingAndGlyphs">ACGL_HEAD-BUDAT</text>
<text x="199.10" y="214.64" font-size="6.40" fill="#3b3b3b" textLength="80.68" lengthAdjust="spacingAndGlyphs">Posting Date in the Document</text>
<rect x="323.6" y="209.84" width="4.4" height="6.6" fill="#a9c9ae"/><path d="M324.4 211.54 H327.6 M324.4 213.14 H327.6 M324.4 214.74 H327.6" stroke="#d8e8da" stroke-width="0.6"/><rect x="319.2" y="209.54" width="5.3" height="7.2" fill="#1d7444"/><path d="M320.8 211.54 L322.9 214.74 M322.9 211.54 L320.8 214.74" stroke="#f0f0f0" stroke-width="0.75"/>
<path d="M328.6 212.54 H333" stroke="#45b07e" stroke-width="1.1"/><path d="M331.4 210.54 L333.8 212.54 L331.4 214.54" stroke="#45b07e" stroke-width="1.1" fill="none"/>
<path d="M334.8 208.84 H345.8 L342.2 215.74 H334.8Z" fill="#0ab2ee"/>
<text x="359.70" y="214.64" font-size="6.40" fill="#3b3b3b" textLength="4.36" lengthAdjust="spacingAndGlyphs">D</text>
<text x="659.40" y="214.64" font-size="6.40" fill="#3b3b3b" textLength="11.06" lengthAdjust="spacingAndGlyphs">C…</text>
<text x="696.25" y="214.64" font-size="6.40" fill="#3b3b3b" textLength="3.35" lengthAdjust="spacingAndGlyphs">8</text>
<rect x="31.7" y="220.67" width="6.7" height="6.8" fill="#fbfbfb" stroke="#ababab" stroke-width="0.7"/>
<path d="M33 224.27 L34.6 225.87 L37.4 222.47" stroke="#3c3c3c" stroke-width="1.0" fill="none"/>
<text x="125.80" y="226.57" font-size="6.40" fill="#3b3b3b" textLength="54.60" lengthAdjust="spacingAndGlyphs">ACGL_HEAD-XBLNR</text>
<text x="199.10" y="226.57" font-size="6.40" fill="#3b3b3b" textLength="79.87" lengthAdjust="spacingAndGlyphs">Reference Document Number</text>
<rect x="323.6" y="221.77" width="4.4" height="6.6" fill="#a9c9ae"/><path d="M324.4 223.47 H327.6 M324.4 225.07 H327.6 M324.4 226.67 H327.6" stroke="#d8e8da" stroke-width="0.6"/><rect x="319.2" y="221.47" width="5.3" height="7.2" fill="#1d7444"/><path d="M320.8 223.47 L322.9 226.67 M322.9 223.47 L320.8 226.67" stroke="#f0f0f0" stroke-width="0.75"/>
<path d="M328.6 224.47 H333" stroke="#45b07e" stroke-width="1.1"/><path d="M331.4 222.47 L333.8 224.47 L331.4 226.47" stroke="#45b07e" stroke-width="1.1" fill="none"/>
<path d="M334.8 220.77 H345.8 L342.2 227.67 H334.8Z" fill="#0ab2ee"/>
<text x="359.70" y="226.57" font-size="6.40" fill="#3b3b3b" textLength="3.16" lengthAdjust="spacingAndGlyphs">E</text>
<text x="659.40" y="226.57" font-size="6.40" fill="#3b3b3b" textLength="11.06" lengthAdjust="spacingAndGlyphs">C…</text>
<text x="692.89" y="226.57" font-size="6.40" fill="#3b3b3b" textLength="6.71" lengthAdjust="spacingAndGlyphs">16</text>
<rect x="31.7" y="232.60" width="6.7" height="6.8" fill="#fbfbfb" stroke="#ababab" stroke-width="0.7"/>
<path d="M33 236.20 L34.6 237.80 L37.4 234.40" stroke="#3c3c3c" stroke-width="1.0" fill="none"/>
<text x="125.80" y="238.50" font-size="6.40" fill="#3b3b3b" textLength="53.51" lengthAdjust="spacingAndGlyphs">ACGL_HEAD-BKTXT</text>
<text x="199.10" y="238.50" font-size="6.40" fill="#3b3b3b" textLength="62.09" lengthAdjust="spacingAndGlyphs">Document Header Text</text>
<rect x="323.6" y="233.70" width="4.4" height="6.6" fill="#a9c9ae"/><path d="M324.4 235.40 H327.6 M324.4 237.00 H327.6 M324.4 238.60 H327.6" stroke="#d8e8da" stroke-width="0.6"/><rect x="319.2" y="233.40" width="5.3" height="7.2" fill="#1d7444"/><path d="M320.8 235.40 L322.9 238.60 M322.9 235.40 L320.8 238.60" stroke="#f0f0f0" stroke-width="0.75"/>
<path d="M328.6 236.40 H333" stroke="#45b07e" stroke-width="1.1"/><path d="M331.4 234.40 L333.8 236.40 L331.4 238.40" stroke="#45b07e" stroke-width="1.1" fill="none"/>
<path d="M334.8 232.70 H345.8 L342.2 239.60 H334.8Z" fill="#0ab2ee"/>
<text x="359.70" y="238.50" font-size="6.40" fill="#3b3b3b" textLength="3.05" lengthAdjust="spacingAndGlyphs">F</text>
<text x="659.40" y="238.50" font-size="6.40" fill="#3b3b3b" textLength="11.06" lengthAdjust="spacingAndGlyphs">C…</text>
<text x="692.89" y="238.50" font-size="6.40" fill="#3b3b3b" textLength="6.71" lengthAdjust="spacingAndGlyphs">25</text>
<rect x="31.7" y="244.53" width="6.7" height="6.8" fill="#fbfbfb" stroke="#ababab" stroke-width="0.7"/>
<path d="M33 248.13 L34.6 249.73 L37.4 246.33" stroke="#3c3c3c" stroke-width="1.0" fill="none"/>
<path d="M65.9 245.23 H54.5 V249.93" stroke="#3372b4" stroke-width="1.5" fill="none"/><path d="M53.1 249.33 L54.5 251.53 L55.9 249.33Z" fill="#3372b4"/>
<text x="71.80" y="250.43" font-size="6.40" fill="#3b3b3b" textLength="27.83" lengthAdjust="spacingAndGlyphs">Start Loop</text>
<text x="429.20" y="250.43" font-size="6.40" fill="#3b3b3b" textLength="46.42" lengthAdjust="spacingAndGlyphs">On Blank Cell I…</text>
<text x="481.00" y="250.43" font-size="6.40" fill="#3b3b3b" textLength="4.29" lengthAdjust="spacingAndGlyphs">G</text>
<rect x="31.7" y="256.46" width="6.7" height="6.8" fill="#fbfbfb" stroke="#ababab" stroke-width="0.7"/>
<path d="M33 260.06 L34.6 261.66 L37.4 258.26" stroke="#3c3c3c" stroke-width="1.0" fill="none"/>
<rect x="57.6" y="256.46" width="10.4" height="7" fill="#fff" stroke="#8a8a8a" stroke-width="0.7"/><rect x="57.3" y="256.16" width="11" height="1.4" fill="#2f6fb8"/>
<text x="71.80" y="262.36" font-size="6.40" fill="#3b3b3b" textLength="49.12" lengthAdjust="spacingAndGlyphs">SAPMF05A - 1001</text>
<text x="199.10" y="262.36" font-size="6.40" fill="#3b3b3b" textLength="70.85" lengthAdjust="spacingAndGlyphs">Enjoy G/L Account Posting</text>
<rect x="31.7" y="268.39" width="6.7" height="6.8" fill="#fbfbfb" stroke="#ababab" stroke-width="0.7"/>
<path d="M33 271.99 L34.6 273.59 L37.4 270.19" stroke="#3c3c3c" stroke-width="1.0" fill="none"/>
<text x="125.80" y="274.29" font-size="6.40" fill="#3b3b3b" textLength="38.78" lengthAdjust="spacingAndGlyphs">BDC_OKCODE</text>
<text x="199.10" y="274.29" font-size="6.40" fill="#3b3b3b" textLength="63.12" lengthAdjust="spacingAndGlyphs">OK Code for this screen</text>
<g transform="translate(323.2 271.79) rotate(45)"><rect x="-2.3" y="-4.3" width="4.6" height="1.5" fill="#7d3fb6"/><rect x="-1.4" y="-3" width="2.8" height="3.2" fill="#8a48c0"/><path d="M-1.6 0 H1.6 L2.9 1.5 H-2.9Z" fill="#7d3fb6"/><rect x="-0.35" y="1.5" width="0.7" height="3.4" fill="#8f8a96"/></g>
<path d="M328.6 272.19 H333" stroke="#45b07e" stroke-width="1.1"/><path d="M331.4 270.19 L333.8 272.19 L331.4 274.19" stroke="#45b07e" stroke-width="1.1" fill="none"/>
<path d="M334.8 268.49 H345.8 L342.2 275.39 H334.8Z" fill="#0ab2ee"/>
<text x="359.70" y="274.29" font-size="6.40" fill="#3b3b3b" textLength="9.01" lengthAdjust="spacingAndGlyphs">/00</text>
<text x="659.40" y="274.29" font-size="6.40" fill="#3b3b3b" textLength="11.06" lengthAdjust="spacingAndGlyphs">C…</text>
<text x="692.89" y="274.29" font-size="6.40" fill="#3b3b3b" textLength="6.71" lengthAdjust="spacingAndGlyphs">20</text>
<rect x="31.7" y="280.32" width="6.7" height="6.8" fill="#fbfbfb" stroke="#ababab" stroke-width="0.7"/>
<path d="M33 283.92 L34.6 285.52 L37.4 282.12" stroke="#3c3c3c" stroke-width="1.0" fill="none"/>
<text x="125.80" y="286.22" font-size="6.40" fill="#3b3b3b" textLength="38.29" lengthAdjust="spacingAndGlyphs">BDC_CURSOR</text>
<text x="199.10" y="286.22" font-size="6.40" fill="#3b3b3b" textLength="40.43" lengthAdjust="spacingAndGlyphs">Cursor location</text>
<g transform="translate(323.2 283.72) rotate(45)"><rect x="-2.3" y="-4.3" width="4.6" height="1.5" fill="#7d3fb6"/><rect x="-1.4" y="-3" width="2.8" height="3.2" fill="#8a48c0"/><path d="M-1.6 0 H1.6 L2.9 1.5 H-2.9Z" fill="#7d3fb6"/><rect x="-0.35" y="1.5" width="0.7" height="3.4" fill="#8f8a96"/></g>
<path d="M328.6 284.12 H333" stroke="#45b07e" stroke-width="1.1"/><path d="M331.4 282.12 L333.8 284.12 L331.4 286.12" stroke="#45b07e" stroke-width="1.1" fill="none"/>
<path d="M334.8 280.42 H345.8 L342.2 287.32 H334.8Z" fill="#0ab2ee"/>
<text x="359.70" y="286.22" font-size="6.40" fill="#3b3b3b" textLength="62.19" lengthAdjust="spacingAndGlyphs">ACGL_ITEM-KOSTL(02)</text>
<text x="659.40" y="286.22" font-size="6.40" fill="#3b3b3b" textLength="11.06" lengthAdjust="spacingAndGlyphs">C…</text>
<text x="692.89" y="286.22" font-size="6.40" fill="#3b3b3b" textLength="6.71" lengthAdjust="spacingAndGlyphs">30</text>
<rect x="31.7" y="292.25" width="6.7" height="6.8" fill="#fbfbfb" stroke="#ababab" stroke-width="0.7"/>
<path d="M33 295.85 L34.6 297.45 L37.4 294.05" stroke="#3c3c3c" stroke-width="1.0" fill="none"/>
<text x="125.80" y="298.15" font-size="6.40" fill="#3b3b3b" textLength="64.89" lengthAdjust="spacingAndGlyphs">ACGL_ITEM-HKONT(02)</text>
<text x="199.10" y="298.15" font-size="6.40" fill="#3b3b3b" textLength="64.31" lengthAdjust="spacingAndGlyphs">General Ledger Account</text>
<rect x="323.6" y="293.35" width="4.4" height="6.6" fill="#a9c9ae"/><path d="M324.4 295.05 H327.6 M324.4 296.65 H327.6 M324.4 298.25 H327.6" stroke="#d8e8da" stroke-width="0.6"/><rect x="319.2" y="293.05" width="5.3" height="7.2" fill="#1d7444"/><path d="M320.8 295.05 L322.9 298.25 M322.9 295.05 L320.8 298.25" stroke="#f0f0f0" stroke-width="0.75"/>
<path d="M328.6 296.05 H333" stroke="#45b07e" stroke-width="1.1"/><path d="M331.4 294.05 L333.8 296.05 L331.4 298.05" stroke="#45b07e" stroke-width="1.1" fill="none"/>
<path d="M334.8 292.35 H345.8 L342.2 299.25 H334.8Z" fill="#0ab2ee"/>
<text x="359.70" y="298.15" font-size="6.40" fill="#3b3b3b" textLength="4.29" lengthAdjust="spacingAndGlyphs">G</text>
<text x="429.20" y="298.15" font-size="6.40" fill="#3b3b3b" textLength="45.31" lengthAdjust="spacingAndGlyphs">Header+Line I…</text>
<text x="659.40" y="298.15" font-size="6.40" fill="#3b3b3b" textLength="11.06" lengthAdjust="spacingAndGlyphs">C…</text>
<text x="692.89" y="298.15" font-size="6.40" fill="#3b3b3b" textLength="6.71" lengthAdjust="spacingAndGlyphs">10</text>
<rect x="31.7" y="304.18" width="6.7" height="6.8" fill="#fbfbfb" stroke="#ababab" stroke-width="0.7"/>
<path d="M33 307.78 L34.6 309.38 L37.4 305.98" stroke="#3c3c3c" stroke-width="1.0" fill="none"/>
<text x="125.80" y="310.08" font-size="6.40" fill="#3b3b3b" textLength="63.53" lengthAdjust="spacingAndGlyphs">ACGL_ITEM-SHKZG(02)</text>
<text x="199.10" y="310.08" font-size="6.40" fill="#3b3b3b" textLength="58.16" lengthAdjust="spacingAndGlyphs">Debit/Credit Indicator</text>
<rect x="323.6" y="305.28" width="4.4" height="6.6" fill="#a9c9ae"/><path d="M324.4 306.98 H327.6 M324.4 308.58 H327.6 M324.4 310.18 H327.6" stroke="#d8e8da" stroke-width="0.6"/><rect x="319.2" y="304.98" width="5.3" height="7.2" fill="#1d7444"/><path d="M320.8 306.98 L322.9 310.18 M322.9 306.98 L320.8 310.18" stroke="#f0f0f0" stroke-width="0.75"/>
<path d="M328.6 307.98 H333" stroke="#45b07e" stroke-width="1.1"/><path d="M331.4 305.98 L333.8 307.98 L331.4 309.98" stroke="#45b07e" stroke-width="1.1" fill="none"/>
<path d="M334.8 304.28 H345.8 L342.2 311.18 H334.8Z" fill="#0ab2ee"/>
<text x="359.70" y="310.08" font-size="6.40" fill="#3b3b3b" textLength="4.49" lengthAdjust="spacingAndGlyphs">H</text>
<text x="429.20" y="310.08" font-size="6.40" fill="#3b3b3b" textLength="45.31" lengthAdjust="spacingAndGlyphs">Header+Line I…</text>
<text x="659.40" y="310.08" font-size="6.40" fill="#3b3b3b" textLength="11.06" lengthAdjust="spacingAndGlyphs">C…</text>
<text x="696.25" y="310.08" font-size="6.40" fill="#3b3b3b" textLength="3.35" lengthAdjust="spacingAndGlyphs">1</text>
<rect x="31.7" y="316.11" width="6.7" height="6.8" fill="#fbfbfb" stroke="#ababab" stroke-width="0.7"/>
<path d="M33 319.71 L34.6 321.31 L37.4 317.91" stroke="#3c3c3c" stroke-width="1.0" fill="none"/>
<text x="125.80" y="322.01" font-size="6.40" fill="#3b3b3b" textLength="64.54" lengthAdjust="spacingAndGlyphs">ACGL_ITEM-WRBTR(02)</text>
<text x="199.10" y="322.01" font-size="6.40" fill="#3b3b3b" textLength="81.01" lengthAdjust="spacingAndGlyphs">Amount in document currency</text>
<rect x="323.6" y="317.21" width="4.4" height="6.6" fill="#a9c9ae"/><path d="M324.4 318.91 H327.6 M324.4 320.51 H327.6 M324.4 322.11 H327.6" stroke="#d8e8da" stroke-width="0.6"/><rect x="319.2" y="316.91" width="5.3" height="7.2" fill="#1d7444"/><path d="M320.8 318.91 L322.9 322.11 M322.9 318.91 L320.8 322.11" stroke="#f0f0f0" stroke-width="0.75"/>
<path d="M328.6 319.91 H333" stroke="#45b07e" stroke-width="1.1"/><path d="M331.4 317.91 L333.8 319.91 L331.4 321.91" stroke="#45b07e" stroke-width="1.1" fill="none"/>
<path d="M334.8 316.21 H345.8 L342.2 323.11 H334.8Z" fill="#0ab2ee"/>
<text x="359.70" y="322.01" font-size="6.40" fill="#3b3b3b" textLength="1.66" lengthAdjust="spacingAndGlyphs">I</text>
<text x="429.20" y="322.01" font-size="6.40" fill="#3b3b3b" textLength="45.31" lengthAdjust="spacingAndGlyphs">Header+Line I…</text>
<text x="659.40" y="322.01" font-size="6.40" fill="#3b3b3b" textLength="11.87" lengthAdjust="spacingAndGlyphs">BCD</text>
<text x="688.06" y="322.01" font-size="6.40" fill="#3b3b3b" textLength="11.54" lengthAdjust="spacingAndGlyphs">13.2</text>
<rect x="31.7" y="328.04" width="6.7" height="6.8" fill="#fbfbfb" stroke="#ababab" stroke-width="0.7"/>
<path d="M33 331.64 L34.6 333.24 L37.4 329.84" stroke="#3c3c3c" stroke-width="1.0" fill="none"/>
<text x="125.80" y="333.94" font-size="6.40" fill="#3b3b3b" textLength="66.07" lengthAdjust="spacingAndGlyphs">ACGL_ITEM-MWSKZ(02)</text>
<text x="199.10" y="333.94" font-size="6.40" fill="#3b3b3b" textLength="40.27" lengthAdjust="spacingAndGlyphs">Sales Tax Code</text>
<rect x="323.6" y="329.14" width="4.4" height="6.6" fill="#a9c9ae"/><path d="M324.4 330.84 H327.6 M324.4 332.44 H327.6 M324.4 334.04 H327.6" stroke="#d8e8da" stroke-width="0.6"/><rect x="319.2" y="328.84" width="5.3" height="7.2" fill="#1d7444"/><path d="M320.8 330.84 L322.9 334.04 M322.9 330.84 L320.8 334.04" stroke="#f0f0f0" stroke-width="0.75"/>
<path d="M328.6 331.84 H333" stroke="#45b07e" stroke-width="1.1"/><path d="M331.4 329.84 L333.8 331.84 L331.4 333.84" stroke="#45b07e" stroke-width="1.1" fill="none"/>
<path d="M334.8 328.14 H345.8 L342.2 335.04 H334.8Z" fill="#0ab2ee"/>
<text x="359.70" y="333.94" font-size="6.40" fill="#3b3b3b" textLength="2.21" lengthAdjust="spacingAndGlyphs">J</text>
<text x="429.20" y="333.94" font-size="6.40" fill="#3b3b3b" textLength="45.31" lengthAdjust="spacingAndGlyphs">Header+Line I…</text>
<text x="659.40" y="333.94" font-size="6.40" fill="#3b3b3b" textLength="11.06" lengthAdjust="spacingAndGlyphs">C…</text>
<text x="696.25" y="333.94" font-size="6.40" fill="#3b3b3b" textLength="3.35" lengthAdjust="spacingAndGlyphs">2</text>
<rect x="31.7" y="339.97" width="6.7" height="6.8" fill="#fbfbfb" stroke="#ababab" stroke-width="0.7"/>
<path d="M33 343.57 L34.6 345.17 L37.4 341.77" stroke="#3c3c3c" stroke-width="1.0" fill="none"/>
<text x="125.80" y="345.87" font-size="6.40" fill="#3b3b3b" textLength="62.19" lengthAdjust="spacingAndGlyphs">ACGL_ITEM-KOSTL(02)</text>
<text x="199.10" y="345.87" font-size="6.40" fill="#3b3b3b" textLength="31.36" lengthAdjust="spacingAndGlyphs">Cost Center</text>
<rect x="323.6" y="341.07" width="4.4" height="6.6" fill="#a9c9ae"/><path d="M324.4 342.77 H327.6 M324.4 344.37 H327.6 M324.4 345.97 H327.6" stroke="#d8e8da" stroke-width="0.6"/><rect x="319.2" y="340.77" width="5.3" height="7.2" fill="#1d7444"/><path d="M320.8 342.77 L322.9 345.97 M322.9 342.77 L320.8 345.97" stroke="#f0f0f0" stroke-width="0.75"/>
<path d="M328.6 343.77 H333" stroke="#45b07e" stroke-width="1.1"/><path d="M331.4 341.77 L333.8 343.77 L331.4 345.77" stroke="#45b07e" stroke-width="1.1" fill="none"/>
<path d="M334.8 340.07 H345.8 L342.2 346.97 H334.8Z" fill="#0ab2ee"/>
<text x="359.70" y="345.87" font-size="6.40" fill="#3b3b3b" textLength="3.62" lengthAdjust="spacingAndGlyphs">K</text>
<text x="429.20" y="345.87" font-size="6.40" fill="#3b3b3b" textLength="45.31" lengthAdjust="spacingAndGlyphs">Header+Line I…</text>
<text x="659.40" y="345.87" font-size="6.40" fill="#3b3b3b" textLength="11.06" lengthAdjust="spacingAndGlyphs">C…</text>
<text x="692.89" y="345.87" font-size="6.40" fill="#3b3b3b" textLength="6.71" lengthAdjust="spacingAndGlyphs">10</text>
<rect x="31.7" y="351.90" width="6.7" height="6.8" fill="#fbfbfb" stroke="#ababab" stroke-width="0.7"/>
<path d="M33 355.50 L34.6 357.10 L37.4 353.70" stroke="#3c3c3c" stroke-width="1.0" fill="none"/>
<rect x="57.6" y="351.90" width="10.4" height="7" fill="#fff" stroke="#8a8a8a" stroke-width="0.7"/><rect x="57.3" y="351.60" width="11" height="1.4" fill="#2f6fb8"/>
<text x="71.80" y="357.80" font-size="6.40" fill="#3b3b3b" textLength="49.12" lengthAdjust="spacingAndGlyphs">SAPMF05A - 1001</text>
<text x="199.10" y="357.80" font-size="6.40" fill="#3b3b3b" textLength="70.85" lengthAdjust="spacingAndGlyphs">Enjoy G/L Account Posting</text>
<rect x="31.7" y="363.83" width="6.7" height="6.8" fill="#fbfbfb" stroke="#ababab" stroke-width="0.7"/>
<path d="M33 367.43 L34.6 369.03 L37.4 365.63" stroke="#3c3c3c" stroke-width="1.0" fill="none"/>
<text x="125.80" y="369.73" font-size="6.40" fill="#3b3b3b" textLength="38.78" lengthAdjust="spacingAndGlyphs">BDC_OKCODE</text>
<text x="199.10" y="369.73" font-size="6.40" fill="#3b3b3b" textLength="63.12" lengthAdjust="spacingAndGlyphs">OK Code for this screen</text>
<g transform="translate(323.2 367.23) rotate(45)"><rect x="-2.3" y="-4.3" width="4.6" height="1.5" fill="#7d3fb6"/><rect x="-1.4" y="-3" width="2.8" height="3.2" fill="#8a48c0"/><path d="M-1.6 0 H1.6 L2.9 1.5 H-2.9Z" fill="#7d3fb6"/><rect x="-0.35" y="1.5" width="0.7" height="3.4" fill="#8f8a96"/></g>
<path d="M328.6 367.63 H333" stroke="#45b07e" stroke-width="1.1"/><path d="M331.4 365.63 L333.8 367.63 L331.4 369.63" stroke="#45b07e" stroke-width="1.1" fill="none"/>
<path d="M334.8 363.93 H345.8 L342.2 370.83 H334.8Z" fill="#0ab2ee"/>
<text x="359.70" y="369.73" font-size="6.40" fill="#3b3b3b" textLength="17.60" lengthAdjust="spacingAndGlyphs">=0005</text>
<text x="659.40" y="369.73" font-size="6.40" fill="#3b3b3b" textLength="11.06" lengthAdjust="spacingAndGlyphs">C…</text>
<text x="692.89" y="369.73" font-size="6.40" fill="#3b3b3b" textLength="6.71" lengthAdjust="spacingAndGlyphs">20</text>
<rect x="31.7" y="375.76" width="6.7" height="6.8" fill="#fbfbfb" stroke="#ababab" stroke-width="0.7"/>
<path d="M33 379.36 L34.6 380.96 L37.4 377.56" stroke="#3c3c3c" stroke-width="1.0" fill="none"/>
<text x="125.80" y="381.66" font-size="6.40" fill="#3b3b3b" textLength="38.29" lengthAdjust="spacingAndGlyphs">BDC_CURSOR</text>
<text x="199.10" y="381.66" font-size="6.40" fill="#3b3b3b" textLength="40.43" lengthAdjust="spacingAndGlyphs">Cursor location</text>
<g transform="translate(323.2 379.16) rotate(45)"><rect x="-2.3" y="-4.3" width="4.6" height="1.5" fill="#7d3fb6"/><rect x="-1.4" y="-3" width="2.8" height="3.2" fill="#8a48c0"/><path d="M-1.6 0 H1.6 L2.9 1.5 H-2.9Z" fill="#7d3fb6"/><rect x="-0.35" y="1.5" width="0.7" height="3.4" fill="#8f8a96"/></g>
<path d="M328.6 379.56 H333" stroke="#45b07e" stroke-width="1.1"/><path d="M331.4 377.56 L333.8 379.56 L331.4 381.56" stroke="#45b07e" stroke-width="1.1" fill="none"/>
<path d="M334.8 375.86 H345.8 L342.2 382.76 H334.8Z" fill="#0ab2ee"/>
<text x="359.70" y="381.66" font-size="6.40" fill="#3b3b3b" textLength="61.30" lengthAdjust="spacingAndGlyphs">ACGL_ITEM-STATE(02)</text>
<text x="659.40" y="381.66" font-size="6.40" fill="#3b3b3b" textLength="11.06" lengthAdjust="spacingAndGlyphs">C…</text>
<text x="692.89" y="381.66" font-size="6.40" fill="#3b3b3b" textLength="6.71" lengthAdjust="spacingAndGlyphs">30</text>
<rect x="31.7" y="387.69" width="6.7" height="6.8" fill="#fbfbfb" stroke="#ababab" stroke-width="0.7"/>
<path d="M33 391.29 L34.6 392.89 L37.4 389.49" stroke="#3c3c3c" stroke-width="1.0" fill="none"/>
<text x="125.80" y="393.59" font-size="6.40" fill="#3b3b3b" textLength="67.96" lengthAdjust="spacingAndGlyphs">ACGL_ITEM-MARKSP(02)</text>
<g transform="translate(323.2 391.09) rotate(45)"><rect x="-2.3" y="-4.3" width="4.6" height="1.5" fill="#7d3fb6"/><rect x="-1.4" y="-3" width="2.8" height="3.2" fill="#8a48c0"/><path d="M-1.6 0 H1.6 L2.9 1.5 H-2.9Z" fill="#7d3fb6"/><rect x="-0.35" y="1.5" width="0.7" height="3.4" fill="#8f8a96"/></g>
<path d="M328.6 391.49 H333" stroke="#45b07e" stroke-width="1.1"/><path d="M331.4 389.49 L333.8 391.49 L331.4 393.49" stroke="#45b07e" stroke-width="1.1" fill="none"/>
<path d="M334.8 387.79 H345.8 L342.2 394.69 H334.8Z" fill="#0ab2ee"/>
<text x="359.70" y="393.59" font-size="6.40" fill="#3b3b3b" textLength="3.62" lengthAdjust="spacingAndGlyphs">X</text>
<text x="659.40" y="393.59" font-size="6.40" fill="#3b3b3b" textLength="11.06" lengthAdjust="spacingAndGlyphs">C…</text>
<rect x="31.7" y="399.62" width="6.7" height="6.8" fill="#fbfbfb" stroke="#ababab" stroke-width="0.7"/>
<path d="M33 403.22 L34.6 404.82 L37.4 401.42" stroke="#3c3c3c" stroke-width="1.0" fill="none"/>
<path d="M54.5 401.02 V405.82 H65.9" stroke="#3372b4" stroke-width="1.5" fill="none"/><path d="M53.1 401.42 L54.5 399.22 L55.9 401.42Z" fill="#3372b4"/>
<text x="71.80" y="405.52" font-size="6.40" fill="#3b3b3b" textLength="25.32" lengthAdjust="spacingAndGlyphs">End Loop</text>
<rect x="31.7" y="411.55" width="6.7" height="6.8" fill="#fbfbfb" stroke="#ababab" stroke-width="0.7"/>
<path d="M33 415.15 L34.6 416.75 L37.4 413.35" stroke="#3c3c3c" stroke-width="1.0" fill="none"/>
<rect x="57.6" y="411.55" width="10.4" height="7" fill="#fff" stroke="#8a8a8a" stroke-width="0.7"/><rect x="57.3" y="411.25" width="11" height="1.4" fill="#2f6fb8"/>
<text x="71.80" y="417.45" font-size="6.40" fill="#3b3b3b" textLength="49.12" lengthAdjust="spacingAndGlyphs">SAPMF05A - 1001</text>
<text x="199.10" y="417.45" font-size="6.40" fill="#3b3b3b" textLength="70.85" lengthAdjust="spacingAndGlyphs">Enjoy G/L Account Posting</text>
<rect x="523.30" y="121.30" width="140.70" height="95.70" fill="#ffffff" stroke="#e2262c" stroke-width="1.4"/>
<rect x="524.20" y="122.20" width="138.90" height="8.50" fill="#dfe200"/>
<text x="526.20" y="137.40" font-size="6.20" fill="#2a2a2a" textLength="82.74" lengthAdjust="spacingAndGlyphs">A-Execute only on the first call</text>
<text x="526.20" y="145.94" font-size="6.20" fill="#2a2a2a" textLength="131.40" lengthAdjust="spacingAndGlyphs">B-Execute only on the first call (normal run only)</text>
<text x="526.20" y="154.48" font-size="6.20" fill="#2a2a2a" textLength="89.60" lengthAdjust="spacingAndGlyphs">C-Suppress Screen with Previous</text>
<text x="526.20" y="163.02" font-size="6.20" fill="#2a2a2a" textLength="82.34" lengthAdjust="spacingAndGlyphs">D-Invert Screen With Previous</text>
<text x="526.20" y="171.56" font-size="6.20" fill="#2a2a2a" textLength="76.60" lengthAdjust="spacingAndGlyphs">E-Suppress During Test Run</text>
<text x="526.20" y="180.10" font-size="6.20" fill="#2a2a2a" textLength="77.27" lengthAdjust="spacingAndGlyphs">G-Suppress Screen on Blank</text>
<text x="526.20" y="188.64" font-size="6.20" fill="#2a2a2a" textLength="75.16" lengthAdjust="spacingAndGlyphs">H-Suppress Screen on Zero</text>
<text x="526.20" y="197.18" font-size="6.20" fill="#2a2a2a" textLength="128.29" lengthAdjust="spacingAndGlyphs">I-Suppress Screen on Blank or Zero or Space(s)</text>
<text x="526.20" y="205.72" font-size="6.20" fill="#2a2a2a" textLength="74.39" lengthAdjust="spacingAndGlyphs">Y-Data Governance Rule…</text>
<text x="526.20" y="214.26" font-size="6.20" fill="#2a2a2a" textLength="73.36" lengthAdjust="spacingAndGlyphs">Z-Custom Dynamic Skip…</text>
<rect x="523.30" y="110.60" width="95.10" height="11.00" fill="#ffffff"/>
<path d="M523.3 121.6 V110.6 H618.4 V121.3" fill="none" stroke="#e2262c" stroke-width="1.4"/>
<text x="525.20" y="119.10" font-size="6.30" fill="#2a2a2a" textLength="81.50" lengthAdjust="spacingAndGlyphs">A-Execute only on the first …</text>
<rect x="609.00" y="111.60" width="8.50" height="9.20" fill="#dde7f1"/>
<path d="M611.6 115.2 L613.25 116.9 L614.9 115.2" stroke="#333" stroke-width="0.9" fill="none"/>
<path d="M375.6 126.3 H486.6 L523.8 127.6 L486.6 139.0 V165.3 H375.6 Z" fill="#16b6f3" stroke="#1463ad" stroke-width="1.3" stroke-linejoin="miter"/>
<text x="382.60" y="139.00" font-size="7.40" fill="#ffffff" textLength="95.90" lengthAdjust="spacingAndGlyphs" font-weight="bold">Remove 'A-Execute only on</text>
<text x="382.60" y="148.70" font-size="7.40" fill="#ffffff" textLength="89.90" lengthAdjust="spacingAndGlyphs" font-weight="bold">the first call'. Select blank</text>
<text x="382.60" y="158.80" font-size="7.40" fill="#ffffff" textLength="77.60" lengthAdjust="spacingAndGlyphs" font-weight="bold">row at this drop-down</text>
<circle cx="8.8" cy="429.8" r="4.4" fill="#3f7cc0"/><rect x="8.2" y="428.6" width="1.2" height="3.8" fill="#dbe8f6"/><rect x="8.2" y="426.6" width="1.2" height="1.2" fill="#dbe8f6"/>
<text x="15.90" y="432.00" font-size="6.50" fill="#ffffff" textLength="44.00" lengthAdjust="spacingAndGlyphs">FB50.itf opened</text>
<text x="520.40" y="431.40" font-size="6.50" fill="#ffffff" textLength="31.30" lengthAdjust="spacingAndGlyphs">Logged Off</text>
<line x1="520.40" y1="433.20" x2="551.70" y2="433.20" stroke="#ffffff" stroke-width="0.6"/>
<ellipse cx="562.4" cy="426.6" rx="3.8" ry="1.4" fill="#f0c040"/><rect x="558.6" y="426.6" width="7.6" height="6" fill="#e0a828"/><ellipse cx="562.4" cy="432.6" rx="3.8" ry="1.4" fill="#e0a828"/><path d="M561 431 L562.6 432.8 L566 429" stroke="#3ac060" stroke-width="1.1" fill="none"/>
<text x="570.70" y="431.40" font-size="6.50" fill="#ffffff" textLength="29.10" lengthAdjust="spacingAndGlyphs">EShare ON</text>
<text x="606.60" y="432.60" font-size="6.50" fill="#ffffff" textLength="50.70" lengthAdjust="spacingAndGlyphs">License Server ON</text>
<rect x="664" y="427.5" width="16" height="6" fill="#5a7fb8" rx="2" filter="url(#blur2)"/>
<rect x="710.60" y="434.60" width="1.00" height="1.00" fill="#8aa6cc"/>
<rect x="708.40" y="434.60" width="1.00" height="1.00" fill="#8aa6cc"/>
<rect x="706.20" y="434.60" width="1.00" height="1.00" fill="#8aa6cc"/>
<rect x="710.60" y="432.40" width="1.00" height="1.00" fill="#8aa6cc"/>
<rect x="708.40" y="432.40" width="1.00" height="1.00" fill="#8aa6cc"/>
<rect x="710.60" y="430.20" width="1.00" height="1.00" fill="#8aa6cc"/>
<rect x="0.00" y="0.00" width="1.10" height="437.00" fill="#3d93c6"/>
<rect x="713.40" y="0.00" width="1.60" height="437.00" fill="#3d93c6"/>
<rect x="0.00" y="0.00" width="715.00" height="0.90" fill="#3d93c6"/>
</svg>
</body></html>
